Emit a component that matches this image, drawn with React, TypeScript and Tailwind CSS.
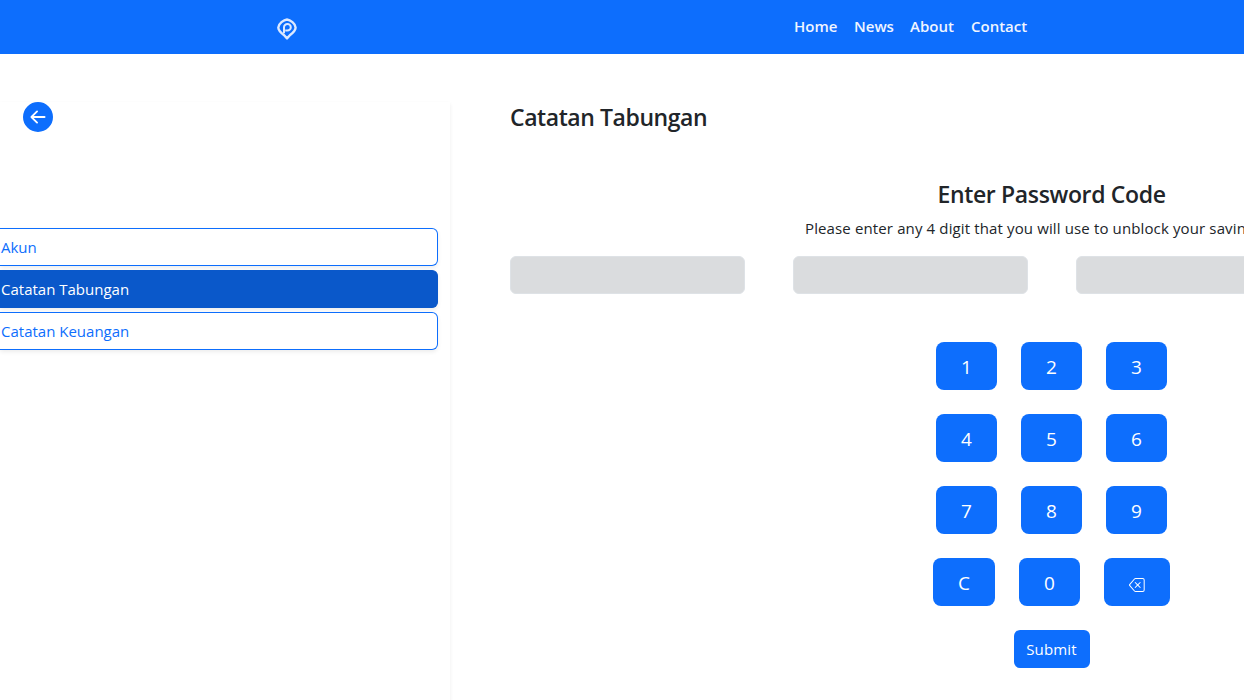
import { BsArrowLeftCircleFill, BsBackspace } from "react-icons/bs";

function Logo() {
  return (
    <svg width="21" height="23" viewBox="0 0 21 23" fill="none" stroke="#dce9ff">
      <path d="M10 1.500c3.200.3 8.500 4.200 8.600 8 0 2.500-2.600 5.300-5.500 7.500L10 20.400l-3.100-3.400C4 14.800 1.300 12 1.300 9.500c.1-3.800 5.500-7.700 8.700-8Z" strokeWidth="2.400" strokeLinejoin="round" />
      <path d="M7 15.200V9.300a3.400 3.200 0 1 1 3.400 3.200H8.200" strokeWidth="2" />
    </svg>
  );
}

const navItems = [
  { label: "Home", box: "w-[44px]" },
  { label: "News", box: "w-[40px]" },
  { label: "About", box: "w-[45px]" },
  { label: "Contact", box: "w-[57px]" },
];

const menu = [
  { label: "Akun", active: false },
  { label: "Catatan Tabungan", active: true },
  { label: "Catatan Keuangan", active: false },
];

const rows = [
  ["1", "2", "3"],
  ["4", "5", "6"],
  ["7", "8", "9"],
];

export default function App() {
  return (
    <div className="h-[700px] w-full overflow-hidden bg-white font-['Open_Sans','Noto_Sans',sans-serif] text-[15px] leading-6 text-[#212529]">
      <header className="flex h-[54px] items-center bg-[#0d6efd] pl-[277px]">
        <div className="mt-[5px] flex w-[517px]">
          <Logo />
        </div>
        <nav className="flex gap-4 pb-0.5 font-semibold text-[#f0f5ff]">
          {navItems.map((item) => (
            <a key={item.label} href="#" className={`${item.box} whitespace-nowrap`}>
              {item.label}
            </a>
          ))}
        </nav>
      </header>

      <div className="flex pt-[48px]">
        <aside className="h-[620px] w-[450px] shrink-0 pr-[12px] shadow-[0_2px_4px_rgba(0,0,0,0.075)]">
          <button className="ml-[23px] block size-[30px] text-[#0d6efd]">
            <BsArrowLeftCircleFill size={30} />
          </button>
          <div className="mt-[96px] flex flex-col gap-1">
            {menu.map((item) => (
              <button
                key={item.label}
                className={`h-[38px] rounded-r-md border border-l-0 pl-px text-left shadow-[0_2px_4px_rgba(0,0,0,0.075)] ${
                  item.active ? "border-[#0a58ca] bg-[#0a58ca] text-white" : "border-[#0d6efd] bg-white text-[#0d6efd]"
                }`}
              >
                {item.label}
              </button>
            ))}
          </div>
        </aside>

        <main className="-mt-px ml-[60px] w-[1083px] shrink-0">
          <h1 className="h-[77px] text-[23px] leading-8 font-semibold tracking-[-0.42px]">Catatan Tabungan</h1>
          <h2 className="text-center text-[23px] leading-8 font-semibold tracking-[-0.35px]">Enter Password Code</h2>
          <p className="mt-[6px] pl-[295px] tracking-[0.13px] whitespace-nowrap">
            Please enter any 4 digit that you will use to unblock your savings
          </p>
          <div className="mt-[16px] flex gap-12">
            {[0, 1, 2, 3].map((i) => (
              <div key={i} className="h-[38px] w-[235px] shrink-0 rounded-md border border-[#dee2e6] bg-[#dadcde]" />
            ))}
          </div>

          <div className="mt-12 flex flex-col items-center gap-6 text-[19px] text-white">
            {rows.map((row) => (
              <div key={row[0]} className="flex gap-6">
                {row.map((digit) => (
                  <button key={digit} className="h-12 w-[61px] rounded-lg bg-[#0d6efd] pt-px">
                    {digit}
                  </button>
                ))}
              </div>
            ))}
            <div className="flex gap-6">
              <button className="h-12 w-[62px] rounded-lg bg-[#0d6efd] pt-px">C</button>
              <button className="h-12 w-[61px] rounded-lg bg-[#0d6efd] pt-px">0</button>
              <button className="flex h-12 w-[66px] items-center justify-center rounded-lg bg-[#0d6efd] pt-1.5">
                <BsBackspace size={16} />
              </button>
            </div>
            <button className="h-[38px] w-[76px] rounded-md bg-[#0d6efd] text-[15px] tracking-[0.15px]">Submit</button>
          </div>
        </main>
      </div>
    </div>
  );
}
